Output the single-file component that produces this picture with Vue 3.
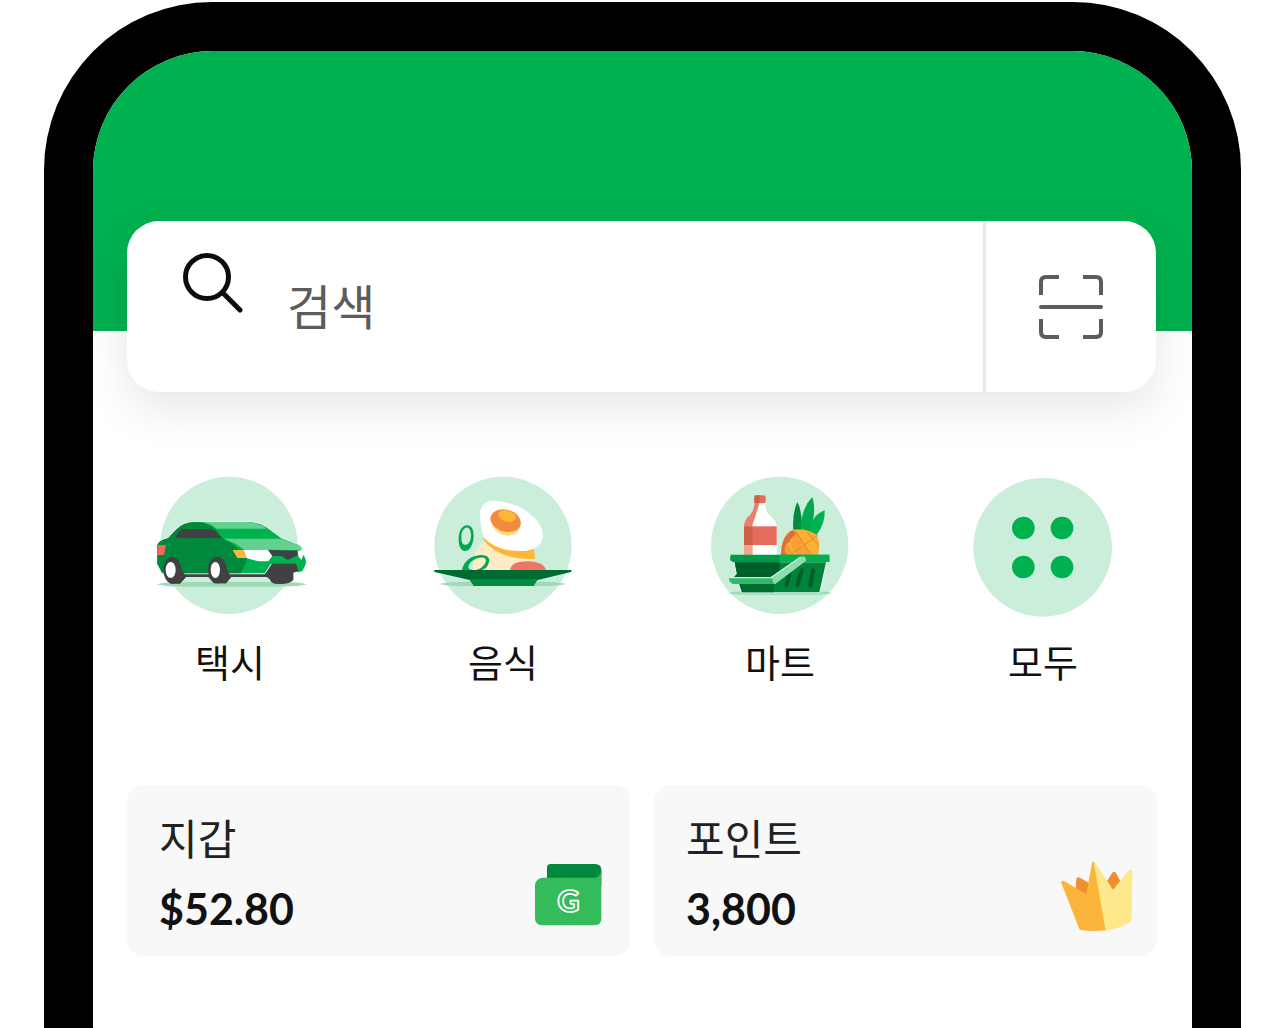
<script setup>
const services = [
  { id: 'taxi', label: '택시' },
  { id: 'food', label: '음식' },
  { id: 'mart', label: '마트' },
  { id: 'all', label: '모두' },
]
const balances = [
  { id: 'wallet', label: '지갑', value: '$52.80' },
  { id: 'points', label: '포인트', value: '3,800' },
]
</script>

<template>
  <main class="phone">
    <div class="screen">
      <header class="banner"></header>

      <form class="search" role="search" @submit.prevent>
        <label class="search-icon" for="search-field" aria-label="검색">
          <svg viewBox="0 0 60 60" width="60" height="60" fill="none" stroke="#0c0c0c" stroke-width="5" stroke-linecap="round">
            <circle cx="24" cy="24" r="21.5" />
            <path d="M40 40L57 57" />
          </svg>
        </label>
        <input id="search-field" class="search-field" type="text" placeholder="검색" />
        <button class="scan" type="button" aria-label="스캔">
          <svg viewBox="0 0 66 66" width="66" height="66" fill="none" stroke="#5c5c5c" stroke-width="4">
            <path d="M3 21V8Q3 3 8 3H21M45 3H58Q63 3 63 8V21M63 45V58Q63 63 58 63H45M21 63H8Q3 63 3 58V45" />
            <path d="M3 33H63" stroke-linecap="round" />
          </svg>
        </button>
      </form>

      <nav class="services">
        <a v-for="s in services" :key="s.id" class="service" href="#">
          <svg v-if="s.id === 'taxi'" class="service-art" viewBox="36 15 468 450">
            <circle cx="267" cy="241" r="206" fill="#cbeedb" />
            <path d="M50 358Q75 350 150 351H400Q480 350 500 358Q480 365 400 365H150Q75 366 50 358Z" fill="#9ddbb7" />
            <path d="M90 322H460V345Q450 356 430 356H408L380 336H274L258 355H222L205 336H138L120 356H92L74 336Z" fill="#414042" />
            <path d="M52 241Q56 226 84 220L108 194Q128 172 165 171H322Q358 172 378 186L424 220L475 240Q487 246 484 256L472 263L484 284L490 270Q502 286 496 300L487 318L474 322L466 298L392 297L374 325H66L52 296Z" fill="#00b14f" stroke="#e9f8ef" stroke-width="6" stroke-linejoin="round" paint-order="stroke" />
            <path d="M52 241Q56 226 84 220L108 194Q128 172 170 171Q206 174 228 194L248 220L282 240L322 282L303 325H118L66 320L52 296Z" fill="#00893d" />
            <path d="M186 171H322Q358 173 380 191H229Q212 175 186 171Z" fill="#62d08f" />
            <path d="M250 221H424L475 240Q487 246 484 256L390 254L310 253Q290 234 250 221Z" fill="#62d08f" />
            <path d="M105 218L115 202Q121 192 135 192H196Q221 192 232 204L246 220Z" fill="#414042" />
            <path d="M54 240H78L72 270H51Z" fill="#ee6b5b" />
            <path d="M278 255H310L321 279H292Z" fill="#fcb737" />
            <path d="M310 254H384L397 273L385 289H356L321 280Z" fill="#fff" />
            <path d="M384 255L473 257V271L443 285L426 273L398 273Z" fill="#414042" />
            <path d="M396 296H468L476 319L456 324L448 346Q442 356 425 356H404Q387 352 389 333L374 329Z" fill="#414042" />
            <path d="M473 258L484 256L490 268L484 284L476 276Z" fill="#fff" />
            <ellipse cx="97" cy="315" rx="27" ry="40" fill="#414042" />
            <ellipse cx="232" cy="315" rx="28" ry="40" fill="#414042" />
            <path d="M94 355H120L138 335L118 300ZM230 355H258L273 335L254 300Z" fill="#414042" />
            <ellipse cx="92" cy="315" rx="15" ry="24" fill="#fff" />
            <ellipse cx="226" cy="315" rx="14" ry="24" fill="#fff" />
          </svg>

          <svg v-else-if="s.id === 'food'" class="service-art" viewBox="15 15 468 450">
            <circle cx="249" cy="241" r="206" fill="#cbeedb" />
            <path d="M58 357Q90 349 150 350H350Q410 349 438 357Q410 364 350 363H150Q90 365 58 357Z" fill="#9ddbb7" />
            <path d="M159 318Q159 239 205 226L340 280L330 318Z" fill="#fdecc8" />
            <path d="M188 219Q233 254 290 253L341 250L346 281Q240 289 188 222Z" fill="#fcb737" />
            <path d="M180 145Q184 106 221 107Q295 111 342 157Q373 190 368 218Q361 258 300 258Q225 257 194 218Q181 199 180 145Z" fill="#fff" />
            <path d="M210 153L302 170Q303 211 264 212Q215 207 210 153Z" fill="#ffdc78" />
            <ellipse cx="257" cy="167" rx="46" ry="33" transform="rotate(15 257 167)" fill="#f38a40" />
            <ellipse cx="261" cy="153" rx="27" ry="17" transform="rotate(14 261 153)" fill="#fcb737" />
            <path fill-rule="evenodd" d="M116 225C115 198 127 180 144 181C160 184 164 206 159 229C154 250 145 259 133 258C121 255 116 242 116 225ZM124 215C124 233 129 241 138 239C149 237 154 223 153 207C151 191 145 187 138 188C129 191 124 202 124 215Z" fill="#00a94d" />
            <path fill-rule="evenodd" d="M126 316C130 287 155 272 182 270C204 269 212 281 206 294C202 307 193 315 177 317ZM148 313C140 300 153 288 171 280C190 274 201 280 197 291C192 304 181 314 162 316Z" fill="#00a94d" />
            <path d="M270 316Q273 289 322 289Q373 290 378 316Z" fill="#ee7565" />
            <path d="M42 315H455L453 321L350 346L340 363H162L149 345L44 321Z" fill="#006b30" />
            <path d="M149 342H354L341 363H162Z" fill="#008b40" />
          </svg>

          <svg v-else-if="s.id === 'mart'" class="service-art" viewBox="6 15 468 450">
            <circle cx="239" cy="241" r="206" fill="#cbeedb" />
            <path d="M82 384Q110 377 160 379H330Q375 377 396 384Q375 391 330 389H150Q110 391 82 384Z" fill="#9ddbb7" />
            <path d="M164 92H196V126Q198 142 215 156Q230 168 230 190V272H132V190Q132 168 149 151Q163 137 164 120Z" fill="#fff" />
            <path d="M164 110L178 115Q168 151 156 184H132Q132 165 149 151Q163 137 164 110Z" fill="#e9806c" />
            <rect x="132" y="240" width="26" height="30" fill="#f0a590" />
            <rect x="163" y="91" width="34" height="24" rx="6" fill="#e86b59" />
            <path d="M169 91H179V114H163V97Q163 91 169 91Z" fill="#cb6145" />
            <rect x="132" y="184" width="98" height="56" fill="#e56b5b" />
            <rect x="132" y="184" width="26" height="56" fill="#cb6145" />
            <path d="M280 194Q276 146 292 111Q306 134 306 194Z" fill="#008b40" />
            <path d="M303 192Q303 130 337 96Q351 140 329 201Z" fill="#00a94d" />
            <path d="M329 201Q333 151 374 136Q376 176 350 209Z" fill="#00b14f" />
            <path d="M243 273Q242 209 278 195Q318 188 349 209Q364 231 354 272Z" fill="#fcae36" />
            <path d="M243 273Q243 217 276 196L290 203L268 230L256 240L262 273Z" fill="#d9703c" />
            <path d="M269 226L291 202L310 235L282 259ZM258 243L278 272H260L253 254ZM312 239L329 266L320 272H295L284 260Z" fill="#f9a035" />
            <path d="M258 239L280 270M282 261L353 211M290 203L333 270M322 201L356 242" fill="none" stroke="#dc8430" stroke-width="3" />
            <path d="M104 292H378L358 382H126L117 354L102 336L111 327Z" fill="#00843a" stroke="#e9f8ef" stroke-width="6" paint-order="stroke" />
            <path d="M104 292H239V330L215 336H102L111 326Z" fill="#005e2b" />
            <path d="M118 357H222V382H126Z" fill="#006b30" />
            <path d="M270 314L260 359M305 316L292 361M339 316L331 361" stroke="#005e2b" stroke-width="13" stroke-linecap="round" />
            <path d="M92 269H388V291H98L90 284Z" fill="#009b46" />
            <path d="M239 269H388V291H239Z" fill="#00b14f" />
            <path d="M88 338H211L302 276Q319 270 317 288L225 357H98L88 349Z" fill="#5dcf8b" />
            <path d="M88 338H214L222 357H98L88 349Z" fill="#31b96a" />
            <path d="M214 338L302 276Q319 270 317 288L225 357Z" fill="#8cddad" />
            <path d="M90 338H213L302 276" fill="none" stroke="#c9f0da" stroke-width="4" />
          </svg>

          <svg v-else class="service-art" viewBox="15 15 468 450">
            <circle cx="248" cy="247" r="208" fill="#cbeedb" />
            <g fill="#00b14f">
              <circle cx="190" cy="189" r="34" />
              <circle cx="306" cy="189" r="34" />
              <circle cx="190" cy="306" r="34" />
              <circle cx="306" cy="306" r="34" />
            </g>
          </svg>
          <span class="service-label">{{ s.label }}</span>
        </a>
      </nav>

      <section class="balances">
        <a v-for="b in balances" :key="b.id" class="balance" href="#">
          <span class="balance-text">
            <span class="balance-label">{{ b.label }}</span>
            <strong class="balance-value">{{ b.value }}</strong>
          </span>
          <svg v-if="b.id === 'wallet'" class="balance-art" viewBox="42 258 216 216">
            <path d="M81 278Q81 267 92 267H225Q244 267 244 286V330H81Z" fill="#00893d" />
            <path d="M45 334Q45 308 72 308H225Q242 306 244 284V430Q244 451 223 451H67Q45 451 45 429Z" fill="#33bb5c" />
            <text class="wallet-mark" x="145" y="412" text-anchor="middle">G</text>
          </svg>
          <svg v-else class="balance-art" viewBox="63 63 216 216">
            <path d="M109 117Q112 109 120 113L148 130L142 166L107 148Z" fill="#ef8f30" />
            <path d="M201 123L217 98Q223 92 228 99L241 123L219 151Z" fill="#ef8f30" />
            <path d="M63 127Q65 119 73 124L139 163L156 69Q160 62 165 67L198 271Q155 276 119 269Z" fill="#fdb43a" />
            <path d="M164 66L219 150L267 91Q274 85 277 92L275 243Q241 266 197 272L161 66Z" fill="#ffe78c" />
          </svg>
        </a>
      </section>
    </div>
  </main>
</template>

<style>
body {
  background: #fff;
}
</style>

<style scoped>
* {
  box-sizing: border-box;
}
.phone {
  margin: 2px 39px 0 44px;
  padding: 49px 49px 0;
  min-height: calc(100vh - 2px);
  display: flex;
  background: #000;
  border-radius: 168px 168px 0 0;
  font-family: "Noto Sans CJK KR", "Noto Sans", sans-serif;
}
.screen {
  flex: 1;
  min-width: 0;
  background: #fff;
  border-radius: 120px 120px 0 0;
  overflow: hidden;
}
.banner {
  height: 280px;
  background: #00b14f;
}
.search {
  display: flex;
  height: 171px;
  margin: -110px 36px 0 34px;
  padding-left: 56px;
  background: #fff;
  border-radius: 32px;
  box-shadow: 0 16px 48px rgba(0, 0, 0, 0.1);
}
.search-icon {
  padding-top: 32px;
}
.search-field {
  flex: 1;
  min-width: 0;
  margin-left: 44px;
  padding: 0 0 6px;
  border: 0;
  outline: 0;
  background: transparent;
  color: #5c5c5c;
  font-family: inherit;
  font-size: 48px;
}
.search-field::placeholder {
  color: #5c5c5c;
  opacity: 1;
}
.scan {
  width: 173px;
  display: flex;
  align-items: center;
  justify-content: center;
  padding: 0;
  border: 0;
  border-left: 3px solid #e8e8e8;
  background: transparent;
}
.services {
  display: grid;
  grid-template-columns: 273fr 277fr 263fr 156fr;
  margin: 78px 71px 0 59px;
}
.service {
  width: 156px;
  display: flex;
  flex-direction: column;
  align-items: center;
  gap: 17px;
  color: #111;
  text-decoration: none;
}
.service-art {
  width: 156px;
  height: 150px;
}
.service-label {
  font-size: 38px;
  line-height: 48px;
}
.balances {
  display: grid;
  grid-template-columns: 1fr 1fr;
  gap: 24px;
  margin: 100px 35px 72px 34px;
}
.balance {
  display: flex;
  justify-content: space-between;
  align-items: flex-end;
  padding: 28px 24px 23px 32px;
  border-radius: 16px;
  background: #f8f8f8;
  color: #111;
  text-decoration: none;
}
.balance-text {
  display: flex;
  flex-direction: column;
  gap: 24px;
}
.balance-label {
  font-size: 42px;
  line-height: 48px;
  color: #222;
}
.balance-value {
  font-family: Lato, "Noto Sans", sans-serif;
  font-size: 43px;
  font-weight: 700;
  line-height: 48px;
}
.balance-art {
  width: 72px;
  height: 72px;
}
.wallet-mark {
  font-family: Lato, sans-serif;
  font-size: 92px;
  font-weight: 900;
  fill: none;
  stroke: #fff;
  stroke-width: 5px;
}
</style>
